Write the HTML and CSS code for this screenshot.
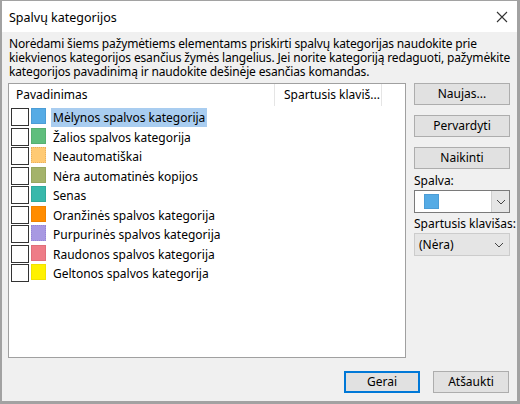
FILE: index.html
```html
<!DOCTYPE html>
<html lang="lt">
<head>
<meta charset="utf-8">
<title>Spalvų kategorijos</title>
<link rel="stylesheet" href="styles.css">
</head>
<body>
<div class="window">
  <div class="titlebar">
    <span class="title">Spalvų kategorijos</span>
    <svg class="close" width="12" height="12" viewBox="0 0 12 12"><path d="M1 1 L11 11 M11 1 L1 11" stroke="#333" stroke-width="1.1" fill="none"/></svg>
  </div>
  <div class="body">
    <p class="desc">Norėdami šiems pažymėtiems elementams priskirti spalvų kategorijas naudokite prie<br>kiekvienos kategorijos esančius žymės langelius. Jei norite kategoriją redaguoti, pažymėkite<br>kategorijos pavadinimą ir naudokite dešinėje esančias komandas.</p>
    <div class="main">
      <div class="list">
        <div class="list-header">
          <div class="col col-name">Pavadinimas</div>
          <div class="col col-key">Spartusis klaviš...</div>
          <div class="col col-rest"></div>
        </div>
        <div class="rows">
          <div class="row"><span class="check"></span><span class="swatch c-blue"></span><span class="label selected">Mėlynos spalvos kategorija</span></div>
          <div class="row"><span class="check"></span><span class="swatch c-green"></span><span class="label">Žalios spalvos kategorija</span></div>
          <div class="row"><span class="check"></span><span class="swatch c-peach"></span><span class="label">Neautomatiškai</span></div>
          <div class="row"><span class="check"></span><span class="swatch c-olive"></span><span class="label">Nėra automatinės kopijos</span></div>
          <div class="row"><span class="check"></span><span class="swatch c-teal"></span><span class="label">Senas</span></div>
          <div class="row"><span class="check"></span><span class="swatch c-orange"></span><span class="label">Oranžinės spalvos kategorija</span></div>
          <div class="row"><span class="check"></span><span class="swatch c-purple"></span><span class="label">Purpurinės spalvos kategorija</span></div>
          <div class="row"><span class="check"></span><span class="swatch c-red"></span><span class="label">Raudonos spalvos kategorija</span></div>
          <div class="row"><span class="check"></span><span class="swatch c-yellow"></span><span class="label">Geltonos spalvos kategorija</span></div>
        </div>
      </div>
      <div class="side">
        <button class="btn side-btn">Naujas...</button>
        <button class="btn side-btn">Pervardyti</button>
        <button class="btn side-btn">Naikinti</button>
        <div class="field-label first">Spalva:</div>
        <div class="color-select">
          <span class="color-value"><span class="swatch-sm c-blue"></span></span>
          <span class="arrow-box"><svg width="10" height="6" viewBox="0 0 10 6"><path d="M1 1 L5 5 L9 1" stroke="#444" stroke-width="1" fill="none"/></svg></span>
        </div>
        <div class="field-label">Spartusis klavišas:</div>
        <div class="key-select">
          <span class="key-value">(Nėra)</span>
          <svg width="10" height="6" viewBox="0 0 10 6"><path d="M1 1 L5 5 L9 1" stroke="#444" stroke-width="1" fill="none"/></svg>
        </div>
      </div>
    </div>
    <div class="footer">
      <button class="btn foot-btn default">Gerai</button>
      <button class="btn foot-btn">Atšaukti</button>
    </div>
  </div>
</div>
</body>
</html>
```
FILE: styles.css
```css
* { box-sizing: border-box; }
html, body { margin: 0; padding: 0; }
body {
  width: 520px;
  height: 404px;
  font-family: "Noto Sans", "DejaVu Sans", sans-serif;
  font-size: 12px;
  color: #000;
  background: #f0f0f0;
}
.window {
  width: 520px;
  height: 404px;
  border-style: solid;
  border-color: #a2a2a2;
  border-width: 1px 3px 3px 2px;
  display: flex;
  flex-direction: column;
  background: #f0f0f0;
}
.titlebar {
  height: 31px;
  background: #fff;
  display: flex;
  align-items: center;
  justify-content: space-between;
  padding: 0 9px 0 7px;
  flex: none;
}
.title { font-size: 12.5px; line-height: 16px; padding-top: 2px; }
.close { display: block; margin-top: 1px; }
.body {
  flex: 1;
  display: flex;
  flex-direction: column;
  padding: 0 7px 0 6px;
}
.desc {
  margin: 5px 0 0 1px;
  line-height: 14px;
  white-space: nowrap;
  letter-spacing: -0.15px;
}
.main {
  display: flex;
  justify-content: space-between;
  margin-top: 4px;
  height: 275px;
  flex: none;
}
.list {
  width: 398px;
  height: 275px;
  background: #fff;
  border: 1px solid #a0a0a0;
  display: flex;
  flex-direction: column;
}
.list-header {
  display: flex;
  height: 22px;
  flex: none;
}
.col {
  line-height: 22px;
  white-space: nowrap;
  overflow: hidden;
}
.col-name { width: 266px; padding-left: 7px; border-right: 1px solid #e5e5e5; }
.col-key { width: 107px; padding-left: 9px; border-right: 1px solid #e5e5e5; }
.col-rest { flex: 1; }
.rows { padding-top: 2px; }
.row {
  height: 19.5px;
  display: flex;
  align-items: flex-start;
  padding-left: 2px;
}
.check {
  width: 18px;
  height: 18px;
  border: 1px solid #333;
  background: #fff;
  flex: none;
}
.swatch {
  width: 15px;
  height: 16px;
  margin: 0 0 0 2px;
  flex: none;
}
.label {
  margin-left: 5px;
  padding: 0 2px;
  height: 19px;
  line-height: 19px;
  white-space: nowrap;
}
.label.selected { background: #a9cdf0; }
.c-blue { background: #55abe5; border: 1px solid #4c9dd6; }
.c-green { background: #5fbe7d; border: 1px solid #56b072; }
.c-peach { background: #ffca74; border: 1px dotted #e8b060; }
.c-olive { background: #a4b36b; border: 1px solid #97a660; }
.c-teal { background: #38b8ab; border: 1px solid #30a99c; }
.c-orange { background: #ff8c00; border: 1px solid #f08200; }
.c-purple { background: #a899e2; border: 1px dotted #9686d4; }
.c-red { background: #ee7c87; border: 1px solid #e06f7a; }
.c-yellow { background: #fff100; border: 1px solid #f2e200; }
.side {
  width: 96px;
  display: flex;
  flex-direction: column;
}
.btn {
  font-family: inherit;
  font-size: 12px;
  color: #000;
  background: #e1e1e1;
  border: 1px solid #adadad;
  padding: 0;
  margin: 0;
  line-height: 18px;
}
.side-btn { height: 22px; width: 96px; margin-bottom: 10px; }
.side-btn:nth-child(3) { margin-bottom: 0; }
.field-label {
  line-height: 16px;
  margin-top: 3px;
  margin-bottom: 1px;
  white-space: nowrap;
}
.field-label.first { margin-top: 4px; }
.color-select {
  height: 23px;
  background: #fff;
  border: 1px solid #7a7a7a;
  display: flex;
}
.color-value { flex: 1; display: flex; align-items: center; padding-left: 9px; }
.swatch-sm { width: 15px; height: 15px; display: block; }
.arrow-box {
  width: 18px;
  background: #e5e5e5;
  border-left: 1px solid #cfcfcf;
  display: flex;
  align-items: center;
  justify-content: center;
}
.key-select {
  height: 23px;
  background: #e5e5e5;
  border: 1px solid #cccccc;
  display: flex;
  align-items: center;
  justify-content: space-between;
  padding: 0 5px 0 4px;
}
.key-value { line-height: 16px; }
.footer {
  margin-top: 13px;
  display: flex;
  justify-content: flex-end;
  gap: 13px;
  padding-right: 1px;
}
.foot-btn { height: 22px; width: 76px; }
.foot-btn.default { border: 2px solid #0078d7; }
```
